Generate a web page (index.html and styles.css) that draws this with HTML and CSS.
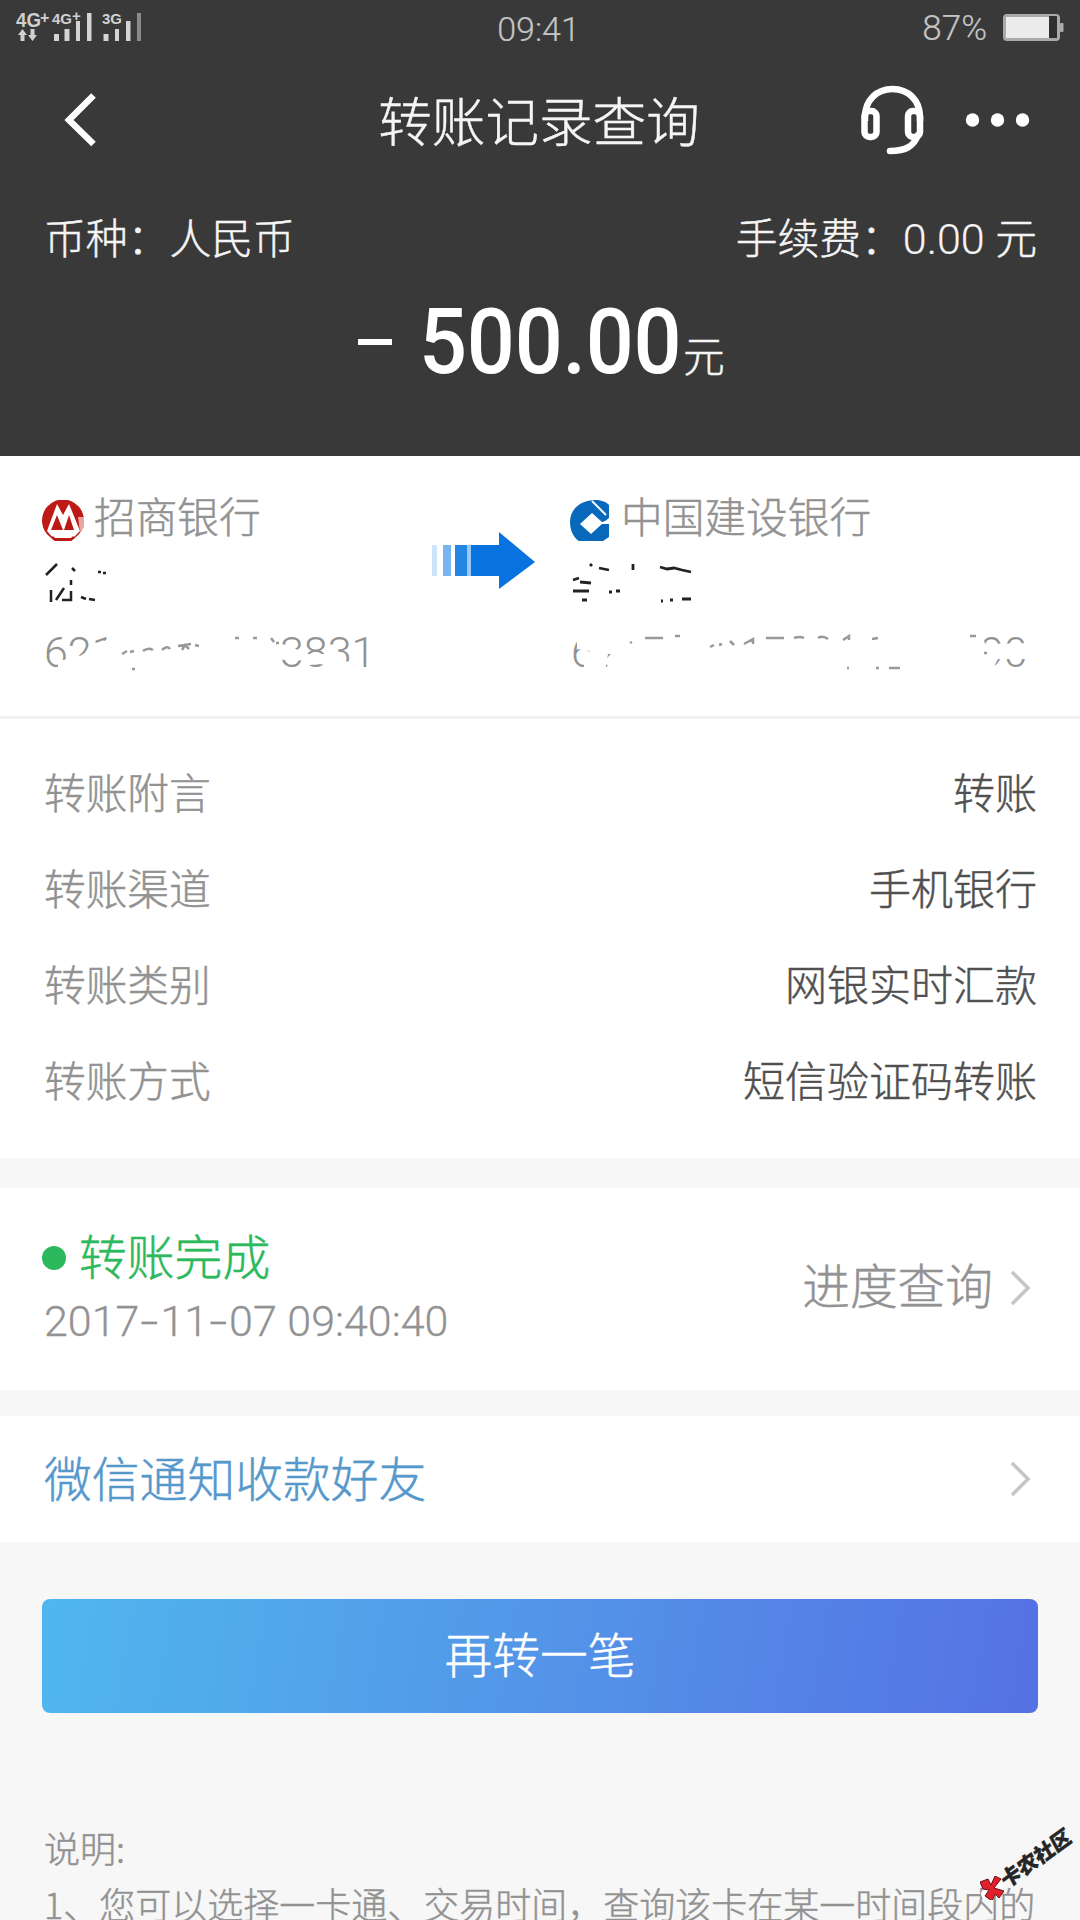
FILE: index.html
```html
<!DOCTYPE html>
<html lang="zh-CN">
<head>
<meta charset="utf-8">
<title>转账记录查询</title>
<link rel="stylesheet" href="styles.css">
</head>
<body>
<div class="screen">
  <header class="header">
    <div class="status-bar">
      <svg class="signal" width="140" height="46" viewBox="0 0 140 46">
        <g class="signal-label">
          <text x="2" y="27" font-size="20" textLength="25" lengthAdjust="spacingAndGlyphs">4G</text>
          <text x="26" y="23" font-size="16">+</text>
          <text x="38" y="24" font-size="15" textLength="20" lengthAdjust="spacingAndGlyphs">4G</text>
          <text x="58" y="21" font-size="15">+</text>
          <text x="88" y="24" font-size="15" textLength="20" lengthAdjust="spacingAndGlyphs">3G</text>
        </g>
        <path d="M8.500 41V33M18.500 29V37" stroke="#d0d0d0" stroke-width="4"/>
        <path d="M4 35L8.500 29L13 35ZM14 35L18.500 41L23 35Z" fill="#d0d0d0"/>
        <path d="M40 34h5v7h-5zM50.500 29h5v12h-5zM62 21h4v20h-4zM73 13h4.500v28h-4.500zM89.500 34h5v7h-5zM101 29h4v12h-4zM112 21h4.500v20h-4.500z" fill="#d4d4d4"/>
        <path d="M123 13h4v28h-4z" fill="#8a8a8a"/>
      </svg>
      <span class="clock">09:41</span>
      <div class="battery">
        <span>87%</span>
        <svg width="62" height="30" viewBox="0 0 62 30">
          <rect x="0" y="1" width="57" height="27" rx="4" fill="#aaa"/>
          <rect x="3" y="4" width="43" height="21" fill="#ececec"/>
          <rect x="46" y="3" width="8" height="22" fill="#303030"/>
          <rect x="57" y="10" width="3.500" height="9" rx="1" fill="#aaa"/>
        </svg>
      </div>
    </div>
    <nav class="nav">
      <svg class="back" width="36" height="60" viewBox="0 0 36 60"><path d="M32.500 5.500L8 30L32.500 54" fill="none" stroke="#fff" stroke-width="6.500"/></svg>
      <h1>转账记录查询</h1>
      <div class="actions">
        <svg width="66" height="74" viewBox="0 0 66 74" fill="none" stroke="#fff" stroke-width="6.500">
          <path d="M5 38V34C5 17 17 6 32.500 6S60 17 60 34V38"/>
          <rect x="4.500" y="28" width="12" height="26" rx="5"/>
          <rect x="48" y="28" width="12" height="26" rx="5"/>
          <path d="M58 52C54 63 46 68 30 68" stroke-linecap="round"/>
        </svg>
        <svg width="66" height="20" viewBox="0 0 66 20" fill="#fff"><circle cx="7.500" cy="10" r="6.700"/><circle cx="32.500" cy="10" r="6.700"/><circle cx="57.500" cy="10" r="6.700"/></svg>
      </div>
    </nav>
    <div class="summary"><span>币种：人民币</span><span>手续费：<span class="num">0.00 </span>元</span></div>
    <div class="amount"><i class="minus"></i><strong>500.00</strong><span>元</span></div>
  </header>

  <section class="banks">
    <div class="bank">
      <div class="bank-name">
        <svg width="42" height="42" viewBox="0 0 42 42">
          <path d="M8 37A21 21 0 1 1 34 37L29 41H13Z" fill="#bd1a16"/>
          <path d="M5 31L15 4L21 15L27 4L38 31L31 38H11Z" fill="#fff"/>
          <path d="M9 30L15 15L21 30ZM22 30L27 15L32 30Z" fill="#bd1a16"/>
          <path d="M36 17h6v10l-4 5z" fill="#eaa49f"/>
          <path d="M10 37L13 39.500H29L32 37" fill="none" stroke="#bd1a16" stroke-width="2.500"/>
        </svg>
        <span>招商银行</span>
      </div>
      <svg class="redacted" width="380" height="130" viewBox="0 0 380 130">
        <path transform="translate(0 3)" d="M2 20L13 9M7 35V47M12 45L20 33M18 45H27V36M27 30V25M28 13L31 16M37 42L42 44M45 44L51 45M54 17H57M59 18H62" stroke="#222" fill="none" stroke-width="2.500"/>
        <text x="0" y="115">621</text><text x="236" y="115">3831</text>
        <path d="M48 93L58 90L70 84V120H22V104H36L46 98ZM14 109L24 107V120H14ZM234 96L250 96L259 101V108L247 109L234 107ZM258 102H284V113L274 112L258 114ZM283 97L294 97L298 120H283ZM296 108L306 110V120H296Z" fill="#fff"/>
        <path d="M78 102L83 99M86 100L90 99M99 99Q104 95 109 98M118 98Q123 93 126 97M134 94L147 92M138 98L141 93L145 97M151 93L155 94M191 86H195M209 86H213M227 86L230 90M232 91H235M88 117H91" stroke="#999" fill="none" stroke-width="2.500"/>
      </svg>
    </div>
    <svg class="arrow" width="104" height="60" viewBox="0 0 104 60">
      <path d="M0 14h5v31H0z" fill="#cce5fb"/><path d="M11 14h8v31h-8z" fill="#77b5f2"/><path d="M23 14h12v31H23z" fill="#2585e5"/><path d="M35 14h4v31h-4z" fill="#99caf7"/>
      <path d="M39 14H67V1L103 31L67 58V45H39Z" fill="#0873df"/>
    </svg>
    <div class="bank">
      <div class="bank-name ccb">
        <svg width="40" height="42" viewBox="0 0 40 42">
          <path d="M39 5C34 0 28 0 24 0C9 1 0 10 0 22C0 31 4 38 9 41H33L39 37V24L34 22L39 18Z" fill="#0868b9"/>
          <path d="M22 1L36 15" stroke="#fff" stroke-width="2"/><path d="M22 13L32 22L39 20V24L32 24L21 34L10 24Z" fill="#fff"/>
        </svg>
        <span>中国建设银行</span>
      </div>
      <svg class="redacted" width="470" height="130" viewBox="0 0 470 130">
        <path transform="translate(0 2)" d="M18 10L20 12M27 14L37 16M61 10V16M88 13L95 15L102 14L110 16L119 18M1 26L7 24M8 28L19 29M1 37H17M10 46H15M37 38H40M44 37H48M89 47H91M98 46H101M110 45H119" stroke="#222" fill="none" stroke-width="2.800"/>
        <text x="-1" y="115">62</text><text x="408" y="115">90</text>
        <path d="M5 80H54V101L36 102L33 120H12V104L18 99L5 97ZM37 109H54V120H33ZM404 80H410L413 92L459 91V107L426 107L419 120H404Z" fill="#fff"/>
        <path d="M58 91L60 90M73 86H91M103 84H108M138 95L142 93M147 93L150 92M158 89L162 93M172 92L181 87V92M194 86H212M222 86Q228 84 232 86M246 86Q251 83 256 87M271 88L277 84V88M300 87L306 86M398 84H404M275 116H277M304 116H307M317 116H328M412 101H415" stroke="#999" fill="none" stroke-width="2.500"/>
      </svg>
    </div>
  </section>

  <dl class="details">
    <div><dt>转账附言</dt><dd>转账</dd></div>
    <div><dt>转账渠道</dt><dd>手机银行</dd></div>
    <div><dt>转账类别</dt><dd>网银实时汇款</dd></div>
    <div><dt>转账方式</dt><dd>短信验证码转账</dd></div>
  </dl>

  <section class="progress">
    <div>
      <div class="done"><i class="dot"></i><span>转账完成</span></div>
      <time>2017<b>-</b>11<b>-</b>07 09:40:40</time>
    </div>
    <div class="query"><span>进度查询</span><svg width="22" height="36" viewBox="0 0 22 36"><path d="M2 2L18 18L2 34" fill="none" stroke="#c5c5c5" stroke-width="3.500"/></svg></div>
  </section>

  <section class="notify">
    <span>微信通知收款好友</span>
    <svg width="22" height="36" viewBox="0 0 22 36"><path d="M2 2L18 18L2 34" fill="none" stroke="#c5c5c5" stroke-width="3.500"/></svg>
  </section>

  <button class="again">再转一笔</button>
  <div class="notes"><p>说明:</p><p>1、您可以选择一卡通、交易时间，查询该卡在某一时间段内的</p></div>

  <div class="watermark">
    <svg width="24" height="24" viewBox="0 0 24 24">
      <circle cx="6" cy="18" r="5" fill="#fff"/><circle cx="18" cy="8" r="5" fill="#fff"/>
      <path d="M0 6L8 3L11 9L15 0L21 3L14 12L24 15L19 22L15 18L12 25L5 20L9 14L3 13Z" fill="#e0202a" stroke="#6b1013" stroke-width="1"/>
    </svg>
    <span>卡农社区</span>
  </div>
</div>
</body>
</html>
```
FILE: styles.css
```css
* { box-sizing: border-box; margin: 0; padding: 0; }
body {
  width: 1080px;
  height: 1920px;
  overflow: hidden;
  background: #f7f7f7;
  font-family: "Noto Sans CJK SC", sans-serif;
  font-weight: 300;
  color: #929292;
  -webkit-text-stroke: 0.45px currentColor;
}
svg { display: block; flex: none; }
.screen { position: relative; height: 1920px; overflow: hidden; }

.header { height: 456px; background: #393939; color: #f5f5f5; }
.status-bar {
  display: grid;
  grid-template-columns: 1fr auto 1fr;
  height: 56px;
  padding: 0 15px 0 14px;
  font: 300 34px/58px Roboto, sans-serif;
  color: #c4c4c4;
  -webkit-text-stroke: 0.2px currentColor;
}
.clock { margin-right: 2px; }
.signal-label { font-family: "Liberation Sans", sans-serif; font-weight: bold; fill: #d0d0d0; -webkit-text-stroke: 0; }
.battery { display: flex; justify-content: flex-end; gap: 16px; font-size: 35px; }
.battery svg { margin-top: 13px; }
.nav {
  display: grid;
  grid-template-columns: 1fr auto 1fr;
  align-items: center;
  height: 128px;
  padding: 0 49px 0 61px;
}
.nav h1 { font-size: 53.6px; line-height: 80px; font-weight: 300; margin: 0 14px 2px 0; }
.nav .back { margin-bottom: 1px; }
.actions { display: flex; justify-content: flex-end; align-items: center; gap: 39px; }
.summary {
  display: flex;
  justify-content: space-between;
  height: 108px;
  padding: 22px 43px 0 44px;
  font-size: 41.8px;
  line-height: 60px;
}
.num { font-family: Roboto, sans-serif; font-size: 43px; line-height: 1; -webkit-text-stroke: 0.2px currentColor; }
.amount { display: flex; height: 110px; padding-left: 358px; }
.minus { width: 34px; height: 6px; margin: 47px 27px 0 0; background: #fff; }
.amount strong {
  width: 264px;
  font: 500 91px/100px Roboto, sans-serif;
  letter-spacing: -0.3px;
  color: #fff;
  -webkit-text-stroke: 0;
  transform: scaleX(0.93);
  transform-origin: left;
}
.amount span { font-size: 41.7px; line-height: 60px; margin-top: 32px; }

.banks { display: flex; height: 263px; padding: 35px 0 0 42px; background: #fff; border-bottom: 3px solid #f2f2f2; }
.bank { width: 388px; }
.bank + .arrow { margin: 40px 0 0 2px; }
.arrow + .bank { width: 500px; margin-left: 34px; }
.bank-name { display: flex; gap: 10px; height: 62px; font-size: 41.7px; line-height: 48px; }
.bank-name svg { margin-top: 9px; }
.redacted { margin: -1px 0 0 2px; overflow: visible; font: 300 43px Roboto, sans-serif; -webkit-text-stroke: 0.3px #929292; }
.redacted text { fill: #929292; }
.ccb { gap: 11px; }

.details { height: 439px; padding: 24px 43px 0 44px; background: #fff; font-size: 41.7px; }
.details div { display: flex; justify-content: space-between; line-height: 96px; }
.details dd { color: #505050; font-size: 42px; }

.progress {
  display: flex;
  justify-content: space-between;
  height: 202px;
  margin-top: 30px;
  padding: 34px 48px 0 42px;
  background: #fff;
}
.done { display: flex; align-items: center; gap: 13px; height: 69px; padding-top: 2px; font-size: 47.8px; line-height: 70px; color: #2cb85c; }
.done span { margin-top: -6px; }
.dot { width: 24px; height: 24px; border-radius: 50%; background: #2cb85c; }
.progress time { display: block; padding-left: 2px; font: 300 43px/60px Roboto, sans-serif; -webkit-text-stroke: 0.3px currentColor; }
.progress time b { display: inline-block; width: 21px; font-weight: 300; text-align: center; transform: scaleX(1.5); }
.query { display: flex; align-items: center; gap: 17px; height: 131px; font-size: 47.7px; }
.query span { margin-top: -9px; }
.notify span { margin-top: -6px; }
.notify {
  display: flex;
  justify-content: space-between;
  align-items: center;
  height: 126px;
  margin-top: 26px;
  padding: 0 48px 0 44px;
  background: #fff;
  font-size: 47.8px;
  color: #5598cc;
}
.again {
  display: block;
  width: 996px;
  height: 114px;
  margin: 57px 42px 0;
  border: 0;
  border-radius: 8px;
  background: linear-gradient(100deg, #50b7ee, #5395e8 50%, #5571e4);
  padding-bottom: 7px;
  font: 300 47.8px/107px "Noto Sans CJK SC", sans-serif;
  color: #fff;
}
.notes { padding: 106px 43px 0 44px; font-size: 36px; line-height: 56px; white-space: nowrap; }
.watermark {
  position: absolute;
  left: 980px;
  top: 1876px;
  display: flex;
  align-items: center;
  font-size: 20.5px;
  font-weight: 900;
  line-height: 24px;
  white-space: nowrap;
  color: #252525;
}
.watermark span { margin: -14px 0 0 -2px; transform: rotate(-36deg) skewX(-8deg); transform-origin: left center; }
```
